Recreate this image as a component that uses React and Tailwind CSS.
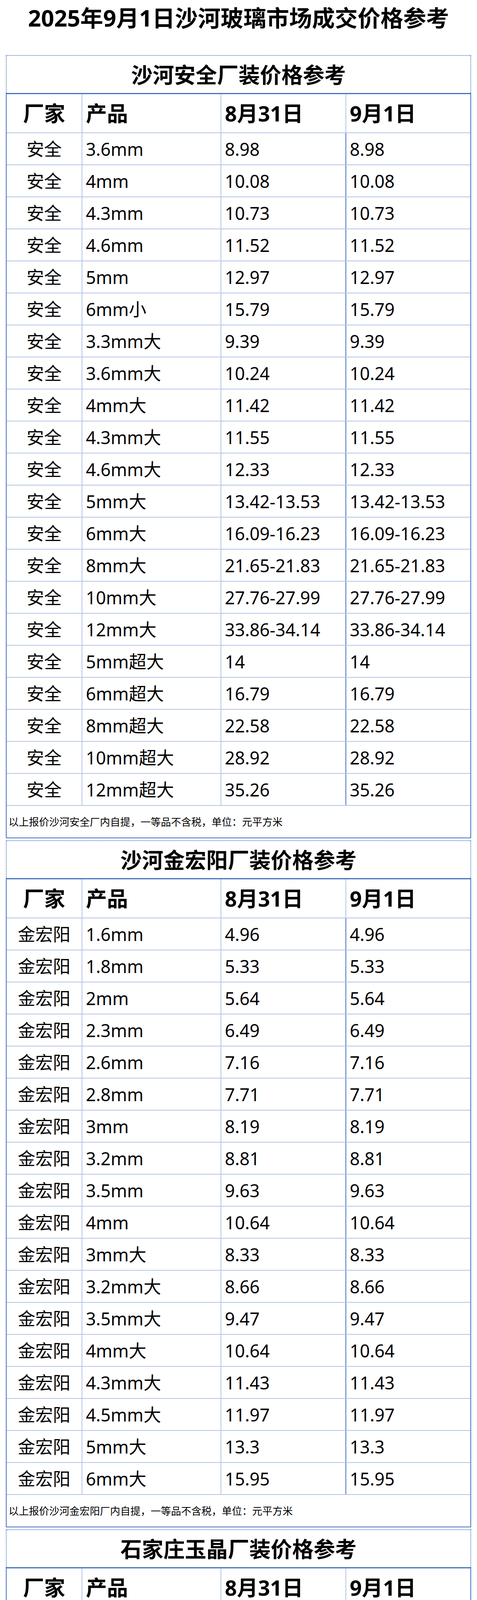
import React from 'react';

const sections = [
  {
    title: '沙河安全厂装价格参考',
    maker: '安全',
    note: '以上报价沙河安全厂内自提，一等品不含税，单位：元平方米',
    rows: [
      ['3.6mm', '8.98', '8.98'],
      ['4mm', '10.08', '10.08'],
      ['4.3mm', '10.73', '10.73'],
      ['4.6mm', '11.52', '11.52'],
      ['5mm', '12.97', '12.97'],
      ['6mm小', '15.79', '15.79'],
      ['3.3mm大', '9.39', '9.39'],
      ['3.6mm大', '10.24', '10.24'],
      ['4mm大', '11.42', '11.42'],
      ['4.3mm大', '11.55', '11.55'],
      ['4.6mm大', '12.33', '12.33'],
      ['5mm大', '13.42-13.53', '13.42-13.53'],
      ['6mm大', '16.09-16.23', '16.09-16.23'],
      ['8mm大', '21.65-21.83', '21.65-21.83'],
      ['10mm大', '27.76-27.99', '27.76-27.99'],
      ['12mm大', '33.86-34.14', '33.86-34.14'],
      ['5mm超大', '14', '14'],
      ['6mm超大', '16.79', '16.79'],
      ['8mm超大', '22.58', '22.58'],
      ['10mm超大', '28.92', '28.92'],
      ['12mm超大', '35.26', '35.26'],
    ],
  },
  {
    title: '沙河金宏阳厂装价格参考',
    maker: '金宏阳',
    note: '以上报价沙河金宏阳厂内自提，一等品不含税，单位：元平方米',
    rows: [
      ['1.6mm', '4.96', '4.96'],
      ['1.8mm', '5.33', '5.33'],
      ['2mm', '5.64', '5.64'],
      ['2.3mm', '6.49', '6.49'],
      ['2.6mm', '7.16', '7.16'],
      ['2.8mm', '7.71', '7.71'],
      ['3mm', '8.19', '8.19'],
      ['3.2mm', '8.81', '8.81'],
      ['3.5mm', '9.63', '9.63'],
      ['4mm', '10.64', '10.64'],
      ['3mm大', '8.33', '8.33'],
      ['3.2mm大', '8.66', '8.66'],
      ['3.5mm大', '9.47', '9.47'],
      ['4mm大', '10.64', '10.64'],
      ['4.3mm大', '11.43', '11.43'],
      ['4.5mm大', '11.97', '11.97'],
      ['5mm大', '13.3', '13.3'],
      ['6mm大', '15.95', '15.95'],
    ],
  },
  {
    title: '石家庄玉晶厂装价格参考',
    maker: '玉晶',
    note: '以上报价石家庄玉晶厂内自提，一等品不含税，单位：元平方米',
    rows: [
      ['4mm大', '10.38', '10.38'],
      ['4.3mm大', '11.18', '11.18'],
      ['5mm大', '13.08', '13.08'],
      ['6mm大', '15.57', '15.57'],
      ['7.2mm大', '18.7', '18.7'],
      ['7.5mm大', '20.49', '20.49'],
      ['8mm大', '20.95', '20.95'],
      ['10mm大', '25.33', '25.33'],
      ['12mm大', '32.3', '32.3'],
    ],
  },
];

function PriceSection({ s }) {
  return (
    <section className="mx-[15px] mb-[5px]">
      <div className="h-[97px] border-2 border-b-0 border-dotted border-[#4472c4] flex items-center justify-center text-[55px] font-bold leading-none">
        {s.title}
      </div>
      <div className="border-x-2 border-t-[3px] border-b-2 border-[#4472c4]">
        <div className="grid grid-cols-[194px_356px_320px_1fr] h-[100px] border-b-2 border-[#b4c6e7] text-[54px] font-bold leading-none">
          <div className="flex items-center justify-center border-r-2 border-[#b4c6e7]">厂家</div>
          <div className="flex items-center pl-[9px] border-r-2 border-[#b4c6e7]">产品</div>
          <div className="flex items-center pl-[9px] border-r-2 border-[#b4c6e7]">8月31日</div>
          <div className="flex items-center pl-[9px]">9月1日</div>
        </div>
        {s.rows.map(([prod, a, b], i) => (
          <div key={i} className="grid grid-cols-[194px_356px_320px_1fr] h-[82px] border-b-2 border-[#b4c6e7] text-[45px] leading-none">
            <div className="flex items-center justify-center border-r-2 border-[#b4c6e7]">{s.maker}</div>
            <div className="flex items-center pl-[9px] border-r-2 border-[#b4c6e7]">{prod}</div>
            <div className="flex items-center pl-[9px] border-r-2 border-[#4472c4]">{a}</div>
            <div className="flex items-center pl-[9px]">{b}</div>
          </div>
        ))}
        <div className="h-[81px] flex items-center pl-[5px] text-[26px] leading-none">{s.note}</div>
      </div>
    </section>
  );
}

export default function App() {
  return (
    <div className="w-[1222px] h-[4951px] overflow-hidden bg-white text-black font-['Noto_Sans','Noto_Sans_CJK_SC',sans-serif]">
      <div className="h-[141px] text-center text-[58.5px] font-bold leading-[90px]">
        2025年9月1日沙河玻璃市场成交价格参考
      </div>
      {sections.map((s) => <PriceSection key={s.title} s={s} />)}
    </div>
  );
}
